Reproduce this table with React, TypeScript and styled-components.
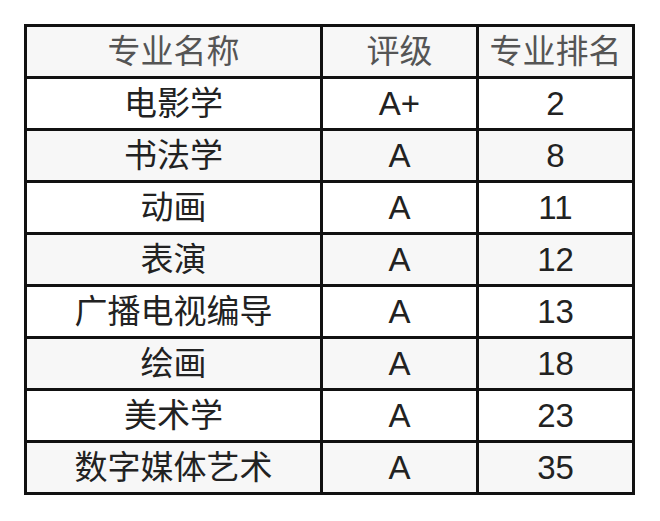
import { FC } from "react";
import styled, { createGlobalStyle } from "styled-components";

const GlobalStyle = createGlobalStyle`
  html, body {
    margin: 0;
    padding: 0;
    background: #ffffff;
  }
`;

const Page = styled.div`
  padding: 24px;
  font-family: "Liberation Sans", "Noto Sans CJK SC", sans-serif;
`;

const StyledTable = styled.table`
  width: 611px;
  table-layout: fixed;
  border-collapse: separate;
  border-spacing: 0;
  border-top: 3px solid #111;
  border-left: 3px solid #111;
`;

const Cell = styled.td<{ $head?: boolean; $shaded?: boolean }>`
  height: 49px;
  padding: 0;
  box-sizing: content-box;
  border-right: 3px solid #111;
  border-bottom: 3px solid #111;
  text-align: center;
  vertical-align: middle;
  font-size: 33px;
  line-height: 1;
  font-weight: 400;
  color: ${({ $head }) => ($head ? "#555" : "#222")};
  background: ${({ $shaded }) => ($shaded ? "#f7f7f7" : "#fff")};
`;

interface Major {
  name: string;
  grade: string;
  rank: number;
}

const majors: Major[] = [
  { name: "电影学", grade: "A+", rank: 2 },
  { name: "书法学", grade: "A", rank: 8 },
  { name: "动画", grade: "A", rank: 11 },
  { name: "表演", grade: "A", rank: 12 },
  { name: "广播电视编导", grade: "A", rank: 13 },
  { name: "绘画", grade: "A", rank: 18 },
  { name: "美术学", grade: "A", rank: 23 },
  { name: "数字媒体艺术", grade: "A", rank: 35 },
];

const App: FC = () => (
  <Page>
    <GlobalStyle />
    <StyledTable>
      <colgroup>
        <col style={{ width: 296 }} />
        <col style={{ width: 156 }} />
        <col style={{ width: 156 }} />
      </colgroup>
      <thead>
        <tr>
          <Cell as="th" $head $shaded>专业名称</Cell>
          <Cell as="th" $head $shaded>评级</Cell>
          <Cell as="th" $head $shaded>专业排名</Cell>
        </tr>
      </thead>
      <tbody>
        {majors.map((m, i) => (
          <tr key={m.name}>
            <Cell $shaded={i % 2 === 1}>{m.name}</Cell>
            <Cell $shaded={i % 2 === 1}>{m.grade}</Cell>
            <Cell $shaded={i % 2 === 1}>{m.rank}</Cell>
          </tr>
        ))}
      </tbody>
    </StyledTable>
  </Page>
);

export default App;
